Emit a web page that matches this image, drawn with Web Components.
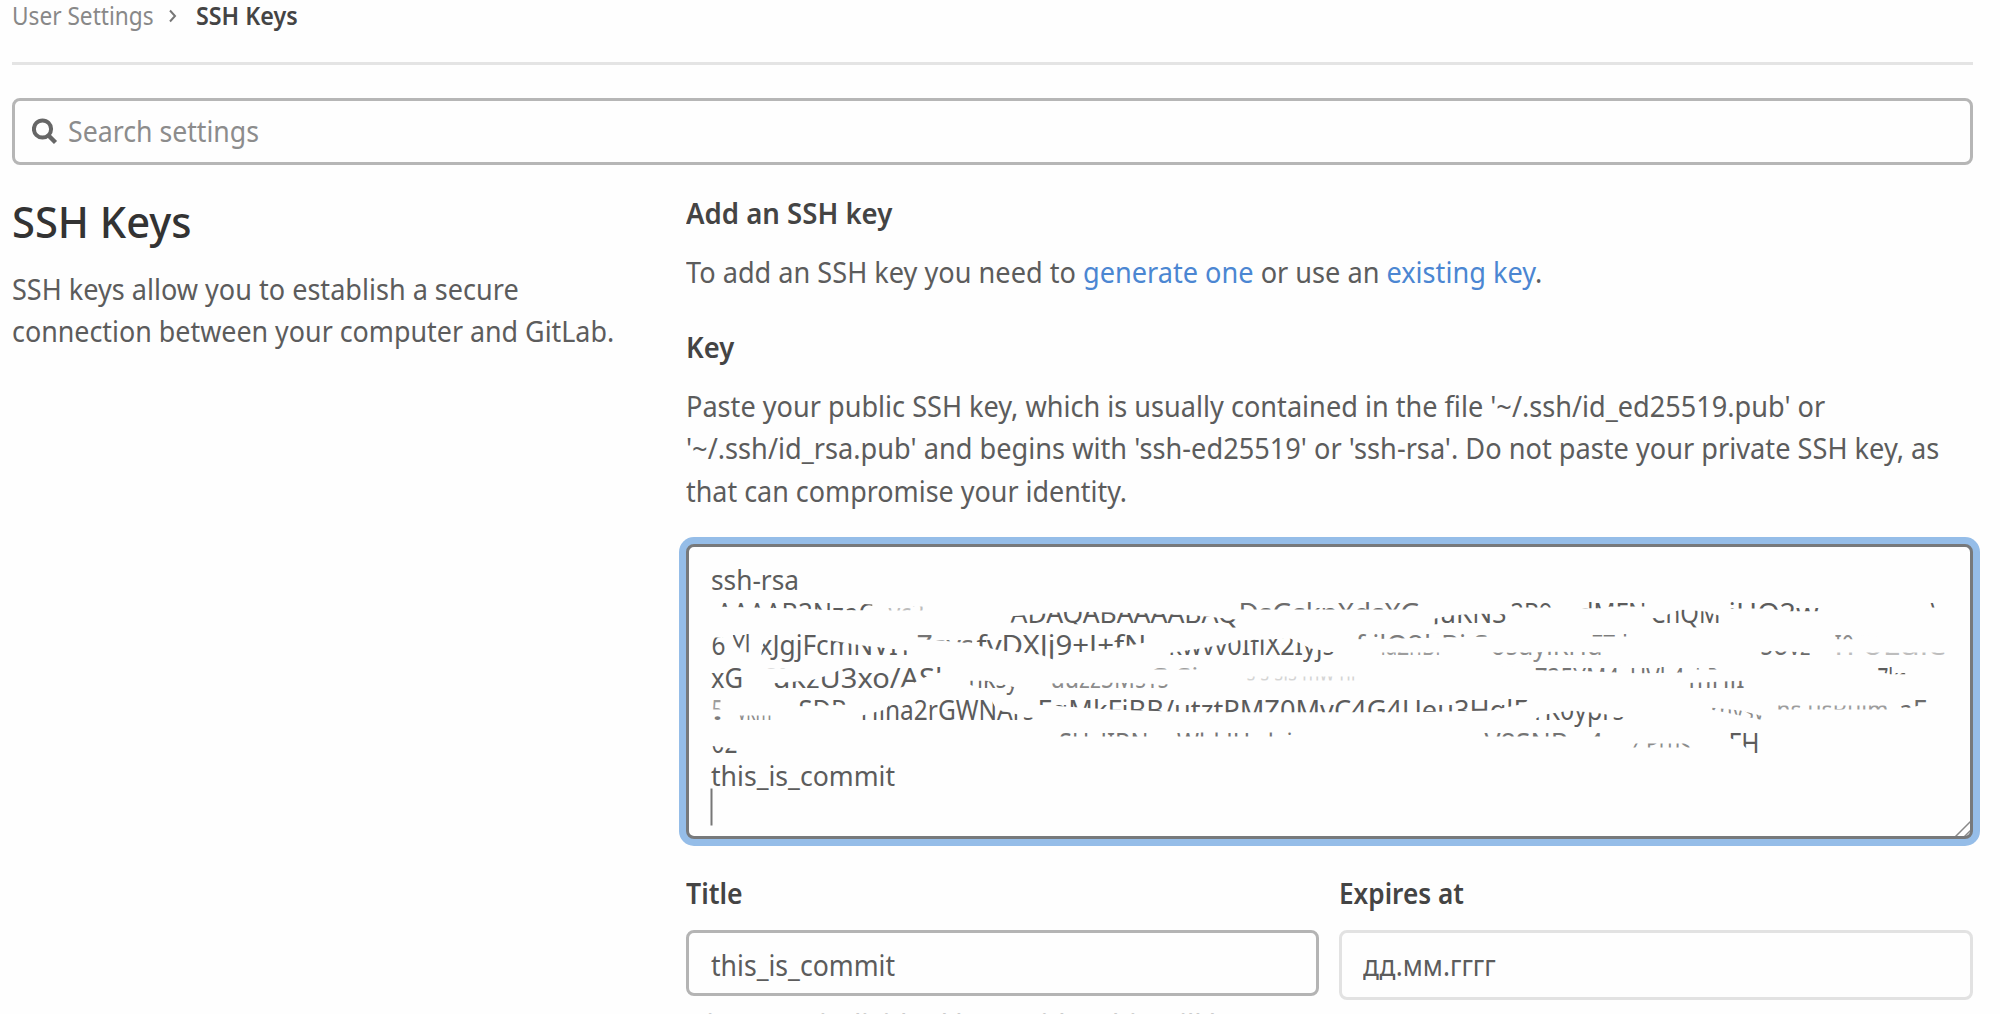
<!DOCTYPE html>
<html lang="en">
<head>
<meta charset="utf-8">
<title>SSH Keys</title>
<style>
html,body{margin:0;background:#fefefe}
body{width:2000px;height:1014px;overflow:hidden;font-family:"Noto Sans","Open Sans",sans-serif;font-size:28.5px;color:#5c5c5c}
</style>
</head>
<body>
<settings-page></settings-page>
<script>
// One line of text, scaled horizontally to the width given in "w".
class FitLine extends HTMLElement{
  connectedCallback(){
    const r=this.attachShadow({mode:'open'});
    r.innerHTML=`<style>:host{display:block;height:42px;line-height:42px;white-space:pre;width:${this.getAttribute('w')}px}
      span{display:inline-block;transform-origin:0 50%}</style><span><slot></slot></span>`;
    const s=r.querySelector('span');
    s.style.transform=`scaleX(${+this.getAttribute('w')/s.offsetWidth})`;
  }
}
customElements.define('fit-line',FitLine);

class BreadCrumbs extends HTMLElement{
  connectedCallback(){
    this.attachShadow({mode:'open'}).innerHTML=`<style>
    :host{display:flex;height:40px;margin-top:-5px;font-size:26px;color:#888;align-items:center}
    fit-line{height:40px;line-height:40px} .cur{color:#444;font-weight:600} svg{margin:2px 17px 0 13px}</style>
    <fit-line w="142">User Settings</fit-line>
    <svg width="12" height="14" viewBox="0 0 12 14" fill="none" stroke="#777" stroke-width="2"><path d="M3 1.5 8 7 3 12.5"/></svg>
    <fit-line class="cur" w="102">SSH Keys</fit-line>`;
  }
}
customElements.define('bread-crumbs',BreadCrumbs);

class SearchBox extends HTMLElement{
  connectedCallback(){
    this.attachShadow({mode:'open'}).innerHTML=`<style>
    :host{display:flex;box-sizing:border-box;height:67px;border:3px solid #b6b6b6;border-radius:8px;align-items:center;padding-left:17px;color:#8c8c8c}
    svg{margin:-1px 10px 0 0}</style>
    <svg width="26" height="28" viewBox="0 0 26 28" fill="none" stroke="#666"><circle cx="10.5" cy="12" r="8.6" stroke-width="4"/><path d="m16.5 18.5 7 7" stroke-width="4.4"/></svg>
    <fit-line w="191">Search settings</fit-line>`;
  }
}
customElements.define('search-box',SearchBox);

class FieldBox extends HTMLElement{
  connectedCallback(){
    const date=this.hasAttribute('date');
    this.attachShadow({mode:'open'}).innerHTML=`<style>
    :host{display:block;flex:1}
    .label{color:#444;font-weight:600}
    .box{box-sizing:border-box;height:${date?70:66}px;margin-top:16px;border:3px solid ${date?'#e2e2e2':'#b4b4b4'};border-radius:8px;padding:${date?11:11}px 0 0 ${date?21:22}px}
    .hint{font-size:25px;color:#ccc;margin-top:5px;height:14px}</style>
    <fit-line class="label" w="${this.getAttribute('lw')}">${this.getAttribute('label')}</fit-line>
    <div class="box"><slot></slot></div><div class="hint"><slot name="hint"></slot></div>`;
  }
}
customElements.define('field-box',FieldBox);

// Focused textarea; the key is scribbled out, only slices of its glyphs remain.
// Each slice: text, x, width, baseline, clip polygon, opacity.
const B=[589,622,654.5,687,719.5,752,785];
const slices=[
 ['ssh-rsa',710.5,88,B[0]],
 ['AAAAB3NzaC',716,158,B[1],'712,600 800,600 872,604 872,610 835,610 800,608 712,606'],
 ['yc2',888,36,B[1],'885,606 925,606 925,610 885,610',.4],
 ['ADAQABAAAABAQ',1010,228,B[1],'1008,616 1070,611 1150,613 1195,615 1245,620 1245,628 1008,622'],
 ['DsGsknXdsXG',1238,182,B[1],'1234,600 1425,600 1425,609 1234,609',.9],
 ['JuKNS',1432,74,B[1],'1425,620 1450,615 1480,613 1510,614 1530,620 1530,624 1425,624'],
 ['3B9',1510,42,B[1],'1508,600 1556,600 1556,607 1508,607'],
 ['dMFN',1578,68,B[1],'1570,600 1650,600 1650,606 1610,606 1600,608 1570,608'],
 ['ChQM',1650,70,B[1],'1640,619 1660,617 1680,609 1705,611 1735,620 1740,630 1640,624'],
 ['iHQ2w',1728,90,B[1],'1724,600 1790,600 1820,608 1820,611 1785,611 1770,608 1724,608'],
 ['\\',1930,9,B[1],'1926,600 1940,600 1940,607 1926,607'],
 ['6',711,14,B[2],'708,637 730,637 730,656 708,656'],
 ['Yl',732,18,B[2],'732,632 750,632 750,652 744,652 732,642'],
 ['xJgjFcmNVIT',758,154,B[2],'762,645 770,632 820,632 830,640 862,645 915,651 915,656 810,656 810,662 760,662'],
 ['Zsvs',916,58,B[2],'910,633 935,633 972,640 972,643 940,640 910,638',.85],
 ['fvDXJj9+J+fN',976,170,B[2],'972,632 1010,633 1040,632 1150,632 1150,641 1118,647 1080,652 1060,662 1040,654 1000,650 972,644'],
 ['kwvv0IflX2Iyjs',1168,166,B[2],'1165,653 1200,648 1228,643 1235,640 1290,638 1310,648 1335,652 1335,664 1300,664 1300,655 1165,655'],
 ['f ilO2hBj S',1355,133,B[2],'1350,638 1360,633 1492,633 1492,636 1350,639',.8],
 ['iaZhBi',1380,60,B[2],'1370,652 1445,652 1445,656 1370,656',.6],
 ['osuyiKHu',1490,112,B[2],'1476,652 1535,652 1550,651 1605,652 1605,656 1545,656 1540,664 1476,656',.7],
 ['FZ k',1590,44,B[2],'1570,633 1640,633 1640,636 1570,636',.8],
 ['SUvz',1760,50,B[2],'1756,650 1810,652 1810,657 1756,657',.9],
 ['I0es',1834,42,B[2],'1830,633 1880,636 1880,639 1830,639',.7],
 ['n oLuie',1834,112,B[2],'1830,652 1948,652 1948,656 1830,656',.4],
 ['xG',710.5,32,B[3],'708,665 742,665 752,688 708,688'],
 ['S0rz',764,44,B[3],'760,664 806,664 806,668 760,668',.4],
 ['ukzU3xo/ASk',772,178,B[3],'770,683 810,680 830,674 842,668 900,664 960,664 960,668 930,674 910,684 890,690 830,688 770,688'],
 ['nksy',968,50,B[3],'966,680 985,680 1020,688 1020,697 1004,697 966,683',.9],
 ['uuzz5MsTs',1050,118,B[3],'1045,683 1110,682 1172,684 1172,688 1045,688',.7],
 ['G Si',1148,50,B[3],'1140,664 1200,664 1200,669 1140,669',.6],
 ['s s sis mw nr',1246,112,680,'1240,676 1362,676 1362,680 1240,680',.25],
 ['nsgZ35YM4sHVk4',1496,188,B[3],'1490,666 1590,664 1720,667 1720,671 1640,673 1570,670 1490,670',.85],
 ['A B',1692,26,B[3],'1690,664 1722,664 1722,669 1690,669',.8],
 ['mHJI',1688,56,B[3],'1676,683 1746,680 1746,688 1676,688',.85],
 ['7ks',1877,30,B[3],'1875,664 1905,667 1905,674 1890,674 1875,670'],
 ['5',711,12,B[4],'708,698 720,698 720,709 708,709',.6],
 ['.',711,12,B[4],'708,715 724,715 724,721 708,721',.8],
 ['vkm',737,34,B[4],'730,715 772,715 772,721 730,721',.7],
 ['SDP',798,48,B[4],'796,698 850,698 850,704 796,706'],
 ['Hlna2rGWNArs',860,174,B[4],'850,718 885,709 893,700 990,698 996,709 1035,718 1035,722 850,722'],
 ['FgMkFiBB/utztPMZ0MvC4G4Ueu3HqlF',1037,490,B[4],'1034,698 1532,698 1520,704 1490,710 1400,712 1200,712 1110,709 1034,704'],
 ['YK0yprs',1530,94,B[4],'1525,722 1545,714 1570,710 1600,713 1630,718 1630,732 1590,732 1525,726'],
 ['rnysy',1710,54,B[4],'1710,707 1740,710 1764,716 1764,720 1735,714 1710,709',.7],
 ['ns usBuim',1776,112,B[4],'1774,705 1896,705 1896,709 1774,709',.6],
 ['aF',1898,28,B[4],'1896,704 1914,698 1928,698 1928,703 1910,707 1896,709',.9],
 ['02',711,26,B[5],'708,745 738,749 738,754 708,754'],
 ['gSUsJIBNs sWbkJHs k i',1044,248,B[5],'1020,732 1300,732 1300,736 1020,736',.85],
 ['V8SNBs 4 g',1484,142,B[5],'1470,732 1625,732 1625,736 1470,736',.85],
 ['z Prus',1630,60,B[5],'1625,743 1695,743 1695,747 1625,747',.7],
 ['FH',1728,31,B[5],'1724,731 1762,731 1762,754 1752,754 1740,742 1724,735'],
 ['this_is_commit',710.5,184,B[6]]
];
class KeyArea extends HTMLElement{
  connectedCallback(){
    const clips=slices.map((s,i)=>s[4]?`<clipPath id="c${i}"><polygon points="${s[4]}"/></clipPath>`:'').join('');
    const texts=slices.map((s,i)=>`<g opacity="${s[5]||1}" ${s[4]?`clip-path="url(#c${i})"`:''}><text x="${s[1]}" y="${s[3]}" textLength="${s[2]}" lengthAdjust="spacingAndGlyphs">${s[0]}</text></g>`).join('');
    this.attachShadow({mode:'open'}).innerHTML=`<style>
    :host{display:block;box-sizing:border-box;height:295px;width:1287.5px;margin:32px 0 33px -.5px;border:3px solid #77797b;border-radius:8px;box-shadow:0 0 0 7px #95bde8;background:#fefefe}
    svg{display:block;font-size:27px;fill:#5c5c5c}</style>
    <svg width="1281.5" height="289" viewBox="688.5 546.5 1281.5 289"><defs>${clips}</defs>${texts}
    <path d="M711 788v37" stroke="#777" stroke-width="2"/><path d="m1955 836 16-16M1964 836l7-7" stroke="#888" stroke-width="1.5"/></svg>`;
  }
}
customElements.define('key-area',KeyArea);

class SettingsPage extends HTMLElement{
  connectedCallback(){
    this.attachShadow({mode:'open'}).innerHTML=`<style>
    :host{display:flow-root;padding:0 27px 0 12px;height:1014px;box-sizing:border-box}
    hr{border:0;height:3px;background:#e4e4e4;margin:27px 0 32.5px}
    main{display:grid;grid-template-columns:674px 1fr;margin-top:26.5px}
    h1{margin:0 0 17px;font-size:44px;font-weight:500;color:#333;line-height:60px;height:60px}
    h1 fit-line{height:60px;line-height:60px}
    .b{font-weight:600;color:#444}
    section{padding-top:1px} a{color:#4b86d2}
    .intro{margin:17px 0 33px} .help{margin:17px 0 0;display:grid;row-gap:.4px}
    .row{display:flex;gap:20px;margin-left:-.5px;width:1287.5px}
    </style>
    <bread-crumbs></bread-crumbs><hr><search-box></search-box>
    <main><div><h1><fit-line w="180">SSH Keys</fit-line></h1>
      <fit-line w="507">SSH keys allow you to establish a secure</fit-line><fit-line w="602">connection between your computer and GitLab.</fit-line></div>
    <section>
      <fit-line class="b" w="206">Add an SSH key</fit-line>
      <fit-line class="intro" w="856">To add an SSH key you need to <a>generate one</a> or use an <a>existing key</a>.</fit-line>
      <fit-line class="b" w="48">Key</fit-line>
      <div class="help"><fit-line w="1139">Paste your public SSH key, which is usually contained in the file '~/.ssh/id_ed25519.pub' or</fit-line>
      <fit-line w="1253">'~/.ssh/id_rsa.pub' and begins with 'ssh-ed25519' or 'ssh-rsa'. Do not paste your private SSH key, as</fit-line>
      <fit-line w="441">that can compromise your identity.</fit-line></div>
      <key-area></key-area>
      <div class="row"><field-box label="Title" lw="57"><fit-line w="184">this_is_commit</fit-line><fit-line slot="hint" w="556">Give your individual key a title. This will be</fit-line></field-box>
      <field-box date label="Expires at" lw="125"><fit-line w="133">дд.мм.гггг</fit-line></field-box></div>
    </section></main>`;
  }
}
customElements.define('settings-page',SettingsPage);
</script>
</body>
</html>
